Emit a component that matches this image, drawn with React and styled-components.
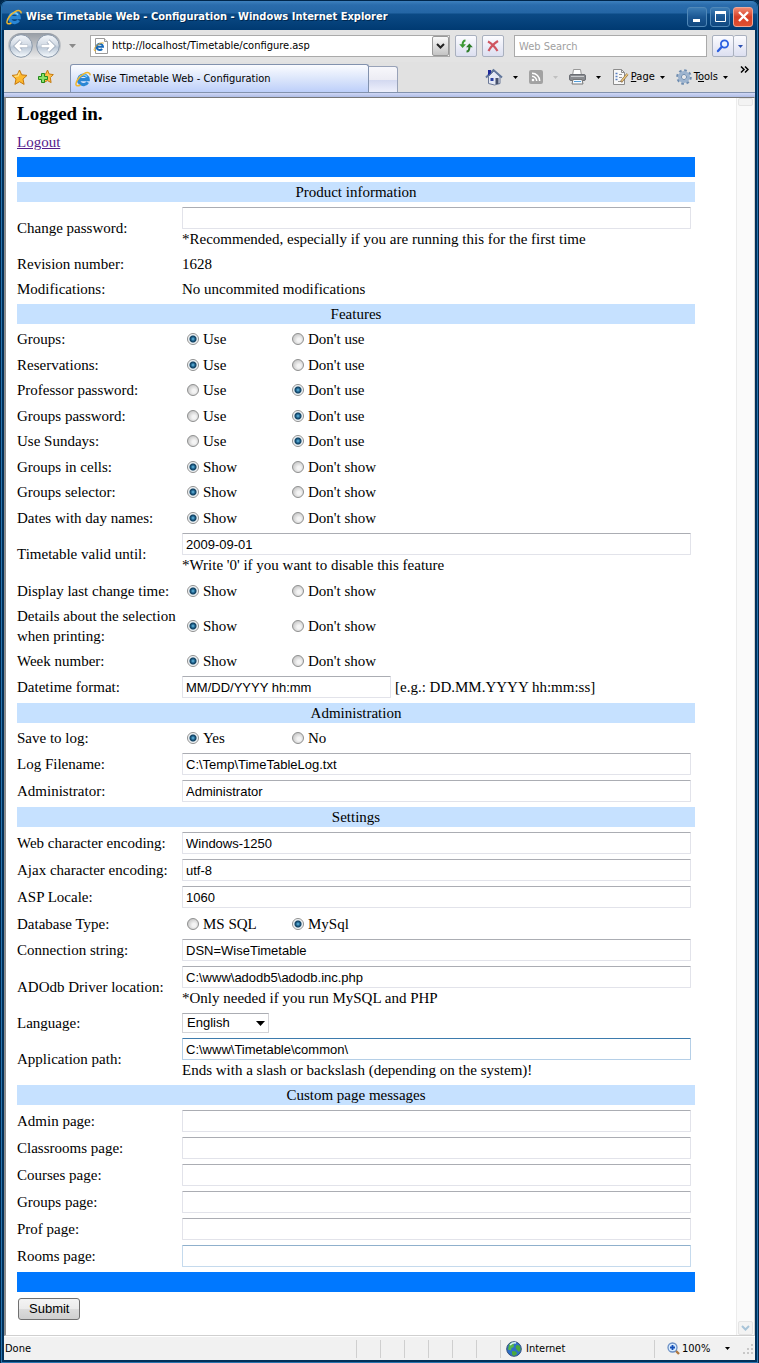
import React, {useState} from 'react';
import styled, {createGlobalStyle, css} from 'styled-components';

const UI_FONT = '"DejaVu Sans Condensed", "DejaVu Sans", sans-serif';
const FORM_FONT = '"Liberation Sans", Arial, sans-serif';
const PAGE_FONT = '"Liberation Serif", "Times New Roman", serif';

const USE = ['Use', "Don't use"];
const SHOW = ['Show', "Don't show"];

const SECTIONS = [
    {
        title: 'Product information',
        fields: [
            {id: 'password', label: 'Change password:', type: 'text', value: '', note: '*Recommended, especially if you are running this for the first time'},
            {id: 'revision', label: 'Revision number:', type: 'static', value: '1628'},
            {id: 'modifications', label: 'Modifications:', type: 'static', value: 'No uncommited modifications'}
        ]
    }, {
        title: 'Features',
        fields: [
            {id: 'groups', label: 'Groups:', type: 'radio', options: USE, value: 0},
            {id: 'reservations', label: 'Reservations:', type: 'radio', options: USE, value: 0, tall: true},
            {id: 'profPassword', label: 'Professor password:', type: 'radio', options: USE, value: 1},
            {id: 'groupsPassword', label: 'Groups password:', type: 'radio', options: USE, value: 1, tall: true},
            {id: 'sundays', label: 'Use Sundays:', type: 'radio', options: USE, value: 1},
            {id: 'groupsInCells', label: 'Groups in cells:', type: 'radio', options: SHOW, value: 0, tall: true},
            {id: 'groupsSelector', label: 'Groups selector:', type: 'radio', options: SHOW, value: 0},
            {id: 'dayNames', label: 'Dates with day names:', type: 'radio', options: SHOW, value: 0, tall: true},
            {id: 'validUntil', label: 'Timetable valid until:', type: 'text', value: '2009-09-01', note: "*Write '0' if you want to disable this feature"},
            {id: 'lastChange', label: 'Display last change time:', type: 'radio', options: SHOW, value: 0, tall: true},
            {id: 'details', label: 'Details about the selection when printing:', type: 'radio', options: SHOW, value: 0},
            {id: 'weekNumber', label: 'Week number:', type: 'radio', options: SHOW, value: 0},
            {id: 'datetime', label: 'Datetime format:', type: 'text', value: 'MM/DD/YYYY hh:mm', hint: '[e.g.: DD.MM.YYYY hh:mm:ss]'}
        ]
    }, {
        title: 'Administration',
        fields: [
            {id: 'saveLog', label: 'Save to log:', type: 'radio', options: ['Yes', 'No'], value: 0},
            {id: 'logFile', label: 'Log Filename:', type: 'text', value: 'C:\\Temp\\TimeTableLog.txt'},
            {id: 'admin', label: 'Administrator:', type: 'text', value: 'Administrator'}
        ]
    }, {
        title: 'Settings',
        fields: [
            {id: 'webEncoding', label: 'Web character encoding:', type: 'text', value: 'Windows-1250'},
            {id: 'ajaxEncoding', label: 'Ajax character encoding:', type: 'text', value: 'utf-8'},
            {id: 'locale', label: 'ASP Locale:', type: 'text', value: '1060'},
            {id: 'dbType', label: 'Database Type:', type: 'radio', options: ['MS SQL', 'MySql'], value: 1, tall: true},
            {id: 'connection', label: 'Connection string:', type: 'text', value: 'DSN=WiseTimetable'},
            {id: 'adodb', label: 'ADOdb Driver location:', type: 'text', value: 'C:\\www\\adodb5\\adodb.inc.php', note: '*Only needed if you run MySQL and PHP'},
            {id: 'language', label: 'Language:', type: 'select', options: ['English'], value: 'English'},
            {id: 'appPath', label: 'Application path:', type: 'text', value: 'C:\\www\\Timetable\\common\\', active: true, note: 'Ends with a slash or backslash (depending on the system)!'}
        ]
    }, {
        title: 'Custom page messages',
        fields: [
            {id: 'adminPage', label: 'Admin page:', type: 'text', value: ''},
            {id: 'classroomsPage', label: 'Classrooms page:', type: 'text', value: ''},
            {id: 'coursesPage', label: 'Courses page:', type: 'text', value: ''},
            {id: 'groupsPage', label: 'Groups page:', type: 'text', value: ''},
            {id: 'profPage', label: 'Prof page:', type: 'text', value: ''},
            {id: 'roomsPage', label: 'Rooms page:', type: 'text', value: '', hot: true}
        ]
    }
];

const IeLogo = ({size = 16}) => (
    <svg width={size} height={size} viewBox="0 0 16 16" aria-hidden="true">
        <path d="M12.6 11.2A4.8 4.8 0 1 1 13.2 8.6H4.6" fill="none" stroke="#2a86d4" strokeWidth="3.2"/>
        <path d="M4 6.6A4.6 4.6 0 0 1 12 5.8" fill="none" stroke="#7cd0fa" strokeWidth="1.4"/>
        <path d="M15 4.4C15.6 1.2 12.2.8 8.8 2.8 4 5.6.4 10.8 1 13.6c.3 1.8 2.6 1.4 4.4.4" fill="none" stroke="#f0b62c" strokeWidth="1.5"/>
    </svg>
);

const PageLogo = () => (
    <svg width="16" height="16" viewBox="0 0 16 16" aria-hidden="true">
        <path d="M2.5.5h9l3 3v12h-12z" fill="#fff" stroke="#9a9a9a"/>
        <path d="M11.5.5v3h3" fill="#eee" stroke="#9a9a9a"/>
        <path d="M9.2 11A3.2 3.2 0 1 1 10 8.7H4.6" fill="none" stroke="#1668b8" strokeWidth="2"/>
        <path d="M10.8 5.4C10 4 5 5.4 2 9.4.6 11.6 1 13.4 3 12.8" fill="none" stroke="#e8b030"/>
    </svg>
);

const NavArrow = ({flip}) => (
    <svg width="24" height="24" viewBox="0 0 24 24" aria-hidden="true">
        <defs>
            <linearGradient id={flip ? 'navF' : 'navB'} x1="0" y1="0" x2="0" y2="1">
                <stop offset="0" stopColor="#f4f7fb"/>
                <stop offset=".45" stopColor="#d3dbe5"/>
                <stop offset=".55" stopColor="#bac7d6"/>
                <stop offset="1" stopColor="#f8fcff"/>
            </linearGradient>
        </defs>
        <circle cx="12" cy="12" r="11.3" fill={`url(#${flip ? 'navF' : 'navB'})`} stroke="#8796a8"/>
        <path d={flip ? 'M5.5 12h11M12 7l5 5-5 5' : 'M18.5 12h-11M12 7l-5 5 5 5'} fill="none" stroke="#8d9bae" strokeWidth="4"/>
        <path d={flip ? 'M5.5 12h11M12 7l5 5-5 5' : 'M18.5 12h-11M12 7l-5 5 5 5'} fill="none" stroke="#fff" strokeWidth="2.8"/>
    </svg>
);

const Caret = ({color = '#000', size = 5}) => (
    <svg width={size} height={size > 7 ? 5 : size > 5 ? 4 : 3} viewBox="0 0 5 3" preserveAspectRatio="none" aria-hidden="true">
        <path d="M0 0h5L2.5 3z" fill={color}/>
    </svg>
);

const Chevron = ({color = '#222'}) => (
    <svg width="9" height="6" viewBox="0 0 9 6" aria-hidden="true">
        <path d="M1 1l3.5 3.5L8 1" fill="none" stroke={color} strokeWidth="2"/>
    </svg>
);

const RefreshIcon = () => (
    <svg width="16" height="16" viewBox="0 0 16 16" aria-hidden="true">
        <path d="M7.5 2.5C5 2.5 4.6 4 4.6 7" fill="none" stroke="#3c9a34" strokeWidth="2"/>
        <path d="M1.2 6.2h6.8L4.6 10z" fill="#3c9a34"/>
        <path d="M8.500 13.500c2.500 0 2.900-1.500 2.900-4.500" fill="none" stroke="#2c7c28" strokeWidth="2"/>
        <path d="M8 9.200h6.800L11.400 5.400z" fill="#2c7c28"/>
    </svg>
);

const StopIcon = () => (
    <svg width="14" height="14" viewBox="0 0 14 14" aria-hidden="true">
        <path d="M2 2.500c4 2 7 5.500 9.500 9.500M12 2C8 4.500 4.500 8 2.500 12" fill="none" stroke="#cf5560" strokeWidth="2.200"/>
    </svg>
);

const SearchIcon = () => (
    <svg width="14" height="14" viewBox="0 0 14 14" aria-hidden="true">
        <circle cx="8.500" cy="5" r="3.600" fill="#eaf3ff" stroke="#2b5fe0" strokeWidth="1.800"/>
        <path d="M5.800 7.800L2 12" stroke="#2b5fe0" strokeWidth="2.400" strokeLinecap="round"/>
    </svg>
);

const StarIcon = () => (
    <svg width="17" height="17" viewBox="0 0 17 17" aria-hidden="true">
        <path d="M8.500 1l2.200 4.800 5.300.6-4 3.600 1.100 5.400-4.600-2.700-4.600 2.700L5 10 1 6.400l5.300-.6z" fill="#fdb92e" stroke="#c67a10"/>
        <path d="M8.500 3.500L7 7l-3.500.4" fill="none" stroke="#ffe48a" strokeWidth="1.300"/>
    </svg>
);

const AddStarIcon = () => (
    <svg width="17" height="17" viewBox="0 0 17 17" aria-hidden="true">
        <path d="M10.500 1l1.600 4 4.200.6-3 3 .8 5-3.600-2-3.900 2 .8-5-3-3 4.300-.6z" fill="#fdc048" stroke="#c67a10"/>
        <path d="M4.500 4.500h3v3h3v3h-3v3h-3v-3h-3v-3h3z" fill="#8ae068" stroke="#248a1c"/>
    </svg>
);

const HomeIcon = () => (
    <svg width="18" height="18" viewBox="0 0 18 18" aria-hidden="true">
        <path d="M3.500 8.500v7l6 1.500 5.500-1.500V8.500L9 3z" fill="#e4e8f4" stroke="#6b7896"/>
        <path d="M1 9.500L8.500 2 17 9.500" fill="none" stroke="#62779c" strokeWidth="2"/>
        <path d="M3 2h3v3L3 7.500z" fill="#202a9a"/>
        <path d="M5.500 10h3v3h-3z" fill="#2a40a0"/>
        <path d="M10.500 10h3v6h-3z" fill="#46516c"/>
    </svg>
);

const FeedIcon = () => (
    <svg width="14" height="14" viewBox="0 0 14 14" aria-hidden="true">
        <rect width="14" height="14" rx="2" fill="#a2a2a2"/>
        <circle cx="4" cy="10" r="1.300" fill="#fff"/>
        <path d="M3 6.300a4.700 4.700 0 0 1 4.700 4.700M3 3.300A7.700 7.700 0 0 1 10.700 11" fill="none" stroke="#fff" strokeWidth="1.500"/>
    </svg>
);

const PrinterIcon = () => (
    <svg width="17" height="16" viewBox="0 0 17 16" aria-hidden="true">
        <path d="M4.500.5h7l1 6h-9z" fill="#fff" stroke="#999"/>
        <rect x=".5" y="5.500" width="16" height="6" rx="1.500" fill="#8a8c90" stroke="#6c6f75"/>
        <path d="M2 7.500h13" stroke="#c8cacd"/>
        <path d="M4 10.500h9l1 4.500H3z" fill="#f5faff" stroke="#777"/>
        <path d="M5 12.500h7" stroke="#58a0d8"/>
    </svg>
);

const PageIcon = () => (
    <svg width="17" height="16" viewBox="0 0 17 16" aria-hidden="true">
        <path d="M1.500.5h8l3 3v12h-11z" fill="#f8f8f8" stroke="#8c8c8c"/>
        <path d="M9.500.5v3h3" fill="none" stroke="#8c8c8c"/>
        <path d="M3.500 4.500h2M3.500 7.500h2M3.500 10.500h2" stroke="#5a80c0" strokeWidth="1.500"/>
        <path d="M7 5.500h3M7 8.500h3M6 12.500h4" stroke="#999"/>
        <path d="M15.500 5L9 13" stroke="#806040" strokeWidth="2.400"/>
        <path d="M15.500 5L9.500 12.400" stroke="#f0cc78" strokeWidth="1.300"/>
    </svg>
);

const GearIcon = () => (
    <svg width="16" height="16" viewBox="0 0 16 16" aria-hidden="true">
        <circle cx="8" cy="8" r="6.600" fill="none" stroke="#6f8db0" strokeWidth="2.400" strokeDasharray="2.600 2.580"/>
        <circle cx="8" cy="8" r="4.500" fill="#dfe8f2" stroke="#9db4cf" strokeWidth="3"/>
        <circle cx="8" cy="8" r="2.600" fill="#e8e8ea" stroke="#6f8db0"/>
    </svg>
);

const GlobeIcon = () => (
    <svg width="16" height="16" viewBox="0 0 16 16" aria-hidden="true">
        <circle cx="8" cy="8" r="7.300" fill="#2d6fc8" stroke="#35507c"/>
        <path d="M3 3.500C5 1 8 1 9 2L7.500 4 8 6 5.500 7 5 9.500 2 8.500z" fill="#58b848"/>
        <path d="M10.500 4l3 .5 1.300 4-1.800 2.500-2-2-1.500-2.500zM6 10l4 .5 1 2.500-3 2-2-1.500z" fill="#4aa83c"/>
        <path d="M4 4c2-2 4.500-2.500 6-2" fill="none" stroke="#d8f0ff" strokeWidth="1.400"/>
    </svg>
);

const ZoomIcon = () => (
    <svg width="13" height="13" viewBox="0 0 13 13" aria-hidden="true">
        <path d="M8.500 8.500l3.500 3.500" stroke="#b07840" strokeWidth="2.400"/>
        <circle cx="5.500" cy="5.500" r="4.500" fill="#d8ecff" stroke="#6a8fc4" strokeWidth="1.300"/>
        <path d="M5.500 3v5M3 5.500h5" stroke="#1450b8" strokeWidth="1.800"/>
    </svg>
);

const Field = ({field}) => {
    const [value, setValue] = useState(field.value);
    const {id, label, type, options, note, hint, tall, active, hot} = field;
    const onChange = e => setValue(e.target.value);

    if (type === 'radio') {
        return (
            <Row $tall={tall} role="radiogroup" aria-labelledby={`${id}-label`}>
                <span id={`${id}-label`}>{label}</span>
                <Options>
                    {options.map((option, i) => (
                        <Option key={option}>
                            <Radio type="radio" name={id} checked={value === i} onChange={() => setValue(i)}/>
                            {option}
                        </Option>
                    ))}
                </Options>
            </Row>
        );
    }

    if (type === 'static') {
        return (
            <Row>
                <span>{label}</span>
                <span>{value}</span>
            </Row>
        );
    }

    return (
        <Row>
            <label htmlFor={id}>{label}</label>
            <Control>
                {type === 'select'
                    ? (
                        <SelectBox>
                            <Select id={id} value={value} onChange={onChange}>
                                {options.map(option => <option key={option}>{option}</option>)}
                            </Select>
                            <Caret size={9}/>
                        </SelectBox>
                    )
                    : <TextBox id={id} type="text" $short={Boolean(hint)} $active={active} $hot={hot} value={value} onChange={onChange}/>}
                {hint && <span>{hint}</span>}
                {note && <Note>{note}</Note>}
            </Control>
        </Row>
    );
};

const App = () => {
    const [address, setAddress] = useState('http://localhost/Timetable/configure.asp');

    return (
        <Window>
            <GlobalStyle/>
            <TitleBar>
                <IeLogo/>
                <Title>Wise Timetable Web - Configuration - Windows Internet Explorer</Title>
                <WindowButton aria-label="Minimize">
                    <svg width="17" height="17"><path d="M4 12.500h7" stroke="#fff" strokeWidth="3"/></svg>
                </WindowButton>
                <WindowButton aria-label="Maximize">
                    <svg width="17" height="17"><path d="M3.500 3.500h10v10h-10z" fill="none" stroke="#fff"/><path d="M3 4.500h11" stroke="#fff" strokeWidth="3"/></svg>
                </WindowButton>
                <WindowButton $close aria-label="Close">
                    <svg width="17" height="17"><path d="M4 4l9 9M13 4l-9 9" stroke="#fff" strokeWidth="2.400"/></svg>
                </WindowButton>
            </TitleBar>
            <NavBar>
                <NavButtons>
                    <PlainButton aria-label="Back"><NavArrow/></PlainButton>
                    <PlainButton aria-label="Forward"><NavArrow flip/></PlainButton>
                </NavButtons>
                <HistoryButton aria-label="Recent pages"><Caret color="#8a8a8a" size={7}/></HistoryButton>
                <AddressBox>
                    <PageLogo/>
                    <AddressInput aria-label="Address" value={address} onChange={e => setAddress(e.target.value)}/>
                    <AddressDrop aria-label="Show address list"><Chevron/></AddressDrop>
                </AddressBox>
                <ToolButton aria-label="Refresh"><RefreshIcon/></ToolButton>
                <ToolButton aria-label="Stop"><StopIcon/></ToolButton>
                <SearchInput aria-label="Web Search" placeholder="Web Search"/>
                <SearchButtons>
                    <SearchGo aria-label="Search"><SearchIcon/></SearchGo>
                    <SearchDrop aria-label="Search options"><Caret color="#2b50b0"/></SearchDrop>
                </SearchButtons>
            </NavBar>
            <TabBar>
                <Favorites>
                    <PlainButton aria-label="Favorites"><StarIcon/></PlainButton>
                    <PlainButton aria-label="Add to favorites"><AddStarIcon/></PlainButton>
                </Favorites>
                <Tab><IeLogo/>Wise Timetable Web - Configuration</Tab>
                <NewTab aria-label="New tab"/>
                <Commands>
                    <Command aria-label="Home"><HomeIcon/><Caret/></Command>
                    <Command aria-label="Feeds"><FeedIcon/><Caret color="#c0c0c0"/></Command>
                    <Command aria-label="Print"><PrinterIcon/><Caret/></Command>
                    <Command $text><PageIcon/><span><u>P</u>age</span><Caret/></Command>
                    <Command $text><GearIcon/><span>T<u>o</u>ols</span><Caret/></Command>
                </Commands>
                <More aria-label="More commands">
                    <svg width="9" height="7" viewBox="0 0 9 7"><path d="M1 .5l3 3-3 3M5 .5l3 3-3 3" fill="none" stroke="#000" strokeWidth="1.500"/></svg>
                </More>
            </TabBar>
            <Strip/>
            <Viewport>
                <Page>
                    <Heading>Logged in.</Heading>
                    <Logout href="#logout">Logout</Logout>
                    <Form onSubmit={e => e.preventDefault()}>
                        <Bar/>
                        {SECTIONS.map(section => (
                            <Section key={section.title}>
                                <SectionTitle>{section.title}</SectionTitle>
                                {section.fields.map(field => <Field key={field.id} field={field}/>)}
                            </Section>
                        ))}
                        <Bar/>
                        <Submit type="submit">Submit</Submit>
                    </Form>
                </Page>
                <ScrollTrack>
                    <ScrollEnd/>
                    <ScrollEnd><Chevron color="#a8c4d8"/></ScrollEnd>
                </ScrollTrack>
            </Viewport>
            <StatusBar>
                <StatusText>Done</StatusText>
                {[1, 2, 3, 4, 5, 6].map(n => <StatusCell key={n}/>)}
                <Zone><GlobeIcon/>Internet</Zone>
                <ZoomLevel><ZoomIcon/><span>100%</span><Caret/></ZoomLevel>
                <svg width="12" height="12" aria-hidden="true">
                    <path d="M8 1h2v2H8zM4 5h2v2H4zM8 5h2v2H8zM0 9h2v2H0zM4 9h2v2H4zM8 9h2v2H8z" fill="#c8c8c8"/>
                </svg>
            </StatusBar>
        </Window>
    );
};

export default App;

const GlobalStyle = createGlobalStyle`
    * {
        box-sizing: border-box;
    }
    body {
        margin: 0;
        background: #00284c;
    }
    button, input, select {
        margin: 0;
        padding: 0;
        font: inherit;
        color: inherit;
    }
    svg {
        display: block;
        flex: none;
    }
`;

const Window = styled.div`
    display: flex;
    flex-direction: column;
    min-height: 100vh;
    padding: 1px 4px 4px;
    border-radius: 7px 7px 0 0;
    background: #00305a;
    box-shadow: inset 0 0 0 1px #00264a, inset 0 0 0 2px #2874ae;
    font: 11px/14px ${UI_FONT};
    color: #000;
`;

const TitleBar = styled.header`
    display: flex;
    align-items: center;
    gap: 3px;
    height: 29px;
    margin: 0 -2px;
    padding: 2px 4px 0;
    border-radius: 6px 6px 0 0;
    background: linear-gradient(#3d80bd 0, #2a6cac 4px, #2466a5 12px, #0b4a85 13px, #003a72 100%);
`;

const Title = styled.h1`
    flex: 1;
    min-width: 0;
    margin: 0 0 0 1px;
    overflow: hidden;
    white-space: nowrap;
    font-size: 11px;
    font-weight: bold;
    color: #fff;
    text-shadow: 1px 1px #002850;
`;

const WindowButton = styled.button`
    display: flex;
    align-items: center;
    justify-content: center;
    width: 20px;
    height: 20px;
    border: 1px solid ${props => props.$close ? '#f0a898' : '#5088b8'};
    border-radius: 3px;
    background: ${props => props.$close
        ? 'linear-gradient(#f08870, #d84028 50%, #e05030)'
        : 'linear-gradient(#3c7cb4, #1c5894 50%, #104880)'};
`;

const NavBar = styled.div`
    display: flex;
    align-items: center;
    height: 32px;
    padding: 0 8px 0 4px;
    background: #e3e3e3;
`;

const PlainButton = styled.button`
    border: 0;
    background: none;
`;

const NavButtons = styled.div`
    display: flex;
    gap: 3px;
    padding: 1px;
    border-radius: 13px;
    background: linear-gradient(#969ca4, #ededed);
`;

const HistoryButton = styled(PlainButton)`
    display: flex;
    justify-content: center;
    width: 29px;
    padding-right: 7px;
`;

const AddressBox = styled.div`
    display: flex;
    flex: 356 1 0;
    align-items: center;
    min-width: 0;
    height: 22px;
    padding-left: 2px;
    border: 1px solid #aaa;
    background: #fff;
`;

const AddressInput = styled.input`
    flex: 1;
    min-width: 0;
    margin-left: 3px;
    border: 0;
    outline: 0;
    background: none;
`;

const buttonFace = css`
    display: flex;
    align-items: center;
    justify-content: center;
    border: 1px solid #a9b0be;
    border-radius: 2px;
    background: linear-gradient(#fcfcff, #dcdff0);
`;

const AddressDrop = styled.button`
    ${buttonFace}
    width: 17px;
    height: 20px;
    border-color: #999;
    background: linear-gradient(#fafafa, #c4c4c4);
`;

const ToolButton = styled.button`
    ${buttonFace}
    width: 22px;
    height: 22px;
    margin-left: 5px;
`;

const SearchInput = styled.input`
    flex: 183 1 0;
    min-width: 0;
    height: 22px;
    margin: 0 5px 0 10px;
    padding: 0 4px;
    border: 1px solid #aaa;
    background: #fff;
    &::placeholder {
        color: #a0a0a0;
        opacity: 1;
    }
`;

const SearchButtons = styled.div`
    display: flex;
`;

const SearchGo = styled.button`
    ${buttonFace}
    width: 22px;
    height: 22px;
`;

const SearchDrop = styled(SearchGo)`
    width: 13px;
    border-left: 0;
`;

const TabBar = styled.div`
    display: flex;
    align-items: flex-end;
    height: 30px;
    background: #e1e1e1;
`;

const Favorites = styled.div`
    display: flex;
    align-self: center;
    gap: 9px;
    width: 66px;
    padding-left: 7px;
`;

const Tab = styled.div`
    display: flex;
    flex: 0 1 299px;
    align-items: center;
    gap: 2px;
    min-width: 0;
    height: 28px;
    padding: 0 4px;
    overflow: hidden;
    white-space: nowrap;
    border: 1px solid #8292ae;
    border-bottom: 0;
    border-radius: 3px 3px 0 0;
    background: linear-gradient(#fbfcff, #dce6fb 50%, #bdcffa);
`;

const NewTab = styled.button`
    width: 29px;
    height: 26px;
    border: 1px solid #98a2b8;
    border-left: 0;
    border-bottom: 0;
    border-radius: 0 3px 0 0;
    background: linear-gradient(#f7f7fb, #ececf4 50%, #d2d8f0 51%, #eef0fc);
`;

const Commands = styled.div`
    display: flex;
    flex: 1;
    align-items: center;
    justify-content: flex-end;
    gap: 11px;
    height: 30px;
`;

const Command = styled(PlainButton)`
    display: flex;
    align-items: center;
    gap: ${props => props.$text ? 2 : 10}px;
    svg:last-child {
        margin-left: ${props => props.$text ? 3 : 0}px;
    }
`;

const More = styled(PlainButton)`
    align-self: flex-start;
    width: 27px;
    padding: 4px 6px 0 12px;
`;

const Strip = styled.div`
    height: 5px;
    border-top: 1px solid #8292ae;
    background: linear-gradient(#d0d8f6, #aebce4);
`;

const Viewport = styled.div`
    display: flex;
    flex: 1;
    border: 1px solid #d0d0d0;
    border-top-color: #777;
    border-left: 2px solid #8c8c8c;
    background: #fff;
`;

const Page = styled.main`
    flex: 1;
    min-width: 0;
    padding: 6px 41px 14px 11px;
    font: 15px/20px ${PAGE_FONT};
`;

const Heading = styled.h3`
    margin: 0 0 8px;
    font-size: 19px;
`;

const Logout = styled.a`
    color: #551a8b;
`;

const Form = styled.form`
    display: flex;
    flex-direction: column;
    gap: 5px;
    margin-top: 5px;
`;

const Bar = styled.div`
    height: 20px;
    background: #0078ff;
`;

const Section = styled.section`
    display: flex;
    flex-direction: column;
    gap: 5px;
`;

const SectionTitle = styled.h2`
    margin: 0;
    background: #c6e1ff;
    font-size: 15px;
    font-weight: normal;
    text-align: center;
`;

const Row = styled.div`
    display: grid;
    grid-template-columns: 160px 1fr;
    column-gap: 5px;
    align-items: center;
    min-height: ${props => props.$tall ? 21 : 20}px;
`;

const Control = styled.div`
    display: flex;
    flex-wrap: wrap;
    align-items: center;
    column-gap: 4px;
    padding-right: 4px;
`;

const Note = styled.div`
    width: 100%;
`;

const TextBox = styled.input`
    width: ${props => props.$short ? '209px' : '100%'};
    height: 22px;
    padding: 0 3px;
    border: 1px solid ${props => props.$active ? '#b5cfe7' : props.$hot ? '#c5daed' : '#e2e3ea'};
    border-top-color: ${props => props.$active ? '#3d7bad' : props.$hot ? '#8fb0cc' : '#abadb3'};
    border-radius: 1px;
    outline: 0;
    background: #fff;
    font: 13px/18px ${FORM_FONT};
`;

const SelectBox = styled.div`
    display: grid;
    align-items: center;
    width: 87px;
    > * {
        grid-area: 1 / 1;
    }
    svg {
        justify-self: end;
        margin-right: 4px;
        pointer-events: none;
    }
`;

const Select = styled.select`
    appearance: none;
    width: 100%;
    height: 20px;
    padding: 0 4px;
    border: 1px solid #d4d4d8;
    border-top-color: #abadb3;
    border-radius: 0;
    background: #fff;
    font: 13px/18px ${FORM_FONT};
`;

const Options = styled.div`
    display: flex;
    padding-left: 5px;
`;

const Option = styled.label`
    display: flex;
    align-items: center;
    gap: 4px;
    width: 105px;
    white-space: nowrap;
`;

const Radio = styled.input`
    appearance: none;
    width: 12px;
    height: 12px;
    border: 1px solid #8e8f8f;
    border-radius: 50%;
    background: radial-gradient(circle at 60% 60%, #f4f4f4 20%, #c8c8c8 75%);
    &:checked {
        background: radial-gradient(circle, #6cc4e8 0, #1c5c88 2px, #12415f 3px, #dfe8ee 4px, #fff 5px);
    }
`;

const Submit = styled.button`
    align-self: flex-start;
    height: 22px;
    margin: 1px;
    padding: 0 10px;
    border: 1px solid #707070;
    border-radius: 3px;
    background: linear-gradient(#f4f4f4, #ebebeb 50%, #dcdcdc 51%, #cfcfcf);
    font: 13px/18px ${FORM_FONT};
`;

const ScrollTrack = styled.div`
    display: flex;
    flex-direction: column;
    justify-content: space-between;
    width: 18px;
    padding: 0 1px;
    border-left: 1px solid #ececec;
    background: #fafafa;
`;

const ScrollEnd = styled.div`
    display: flex;
    align-items: center;
    justify-content: center;
    height: 14px;
    border: 1px solid #e4e4e4;
    border-radius: 2px;
    background: #f3f3f3;
    &:first-child {
        height: 8px;
    }
`;

const StatusBar = styled.footer`
    display: flex;
    align-items: center;
    height: 24px;
    border-top: 1px solid #fff;
    background: #f1f1f1;
`;

const StatusText = styled.span`
    flex: 1;
    padding-left: 1px;
`;

const StatusCell = styled.span`
    width: 24px;
    height: 18px;
    border-left: 1px solid #cfcfcf;
`;

const Zone = styled(StatusCell)`
    display: flex;
    align-items: center;
    gap: 4px;
    width: 154px;
    padding-left: 5px;
`;

const ZoomLevel = styled(Zone)`
    gap: 2px;
    width: 89px;
    padding-left: 12px;
    svg:last-child {
        margin-left: 13px;
    }
`;
